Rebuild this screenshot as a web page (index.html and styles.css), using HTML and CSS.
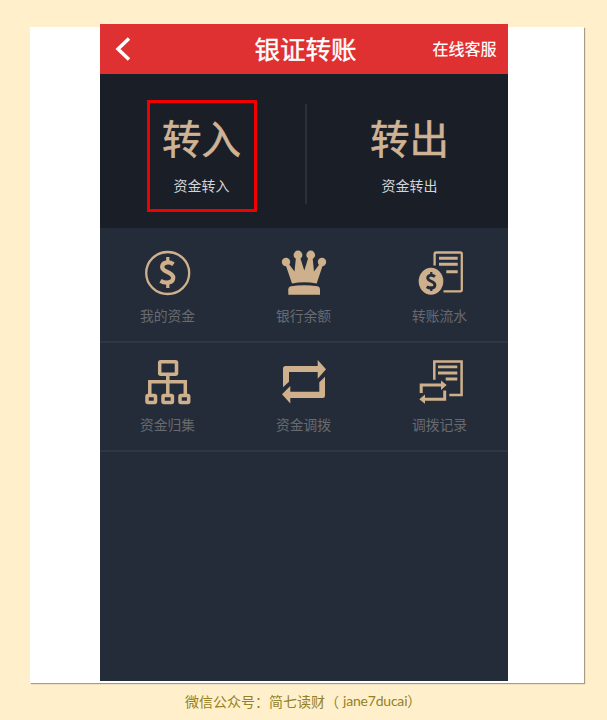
FILE: index.html
```html
<!DOCTYPE html>
<html lang="zh-CN">
<head>
<meta charset="utf-8">
<title>银证转账</title>
<link rel="stylesheet" href="styles.css">
</head>
<body>
<div class="card">
  <main class="phone">
    <header class="bar">
      <svg class="back" viewBox="0 0 16 24"><path d="M14 1.500 3 12l11 10.500"/></svg>
      <h1 class="title">银证转账</h1>
      <span class="service">在线客服</span>
    </header>
    <section class="hero">
      <div class="transfer in"><b class="big">转入</b><span class="small">资金转入</span></div>
      <div class="divider"></div>
      <div class="transfer out"><b class="big">转出</b><span class="small">资金转出</span></div>
    </section>
    <section class="row">
      <div class="item">
        <svg class="icon" viewBox="0 0 50 50">
          <ellipse class="line" cx="24.700" cy="25" rx="21.500" ry="21" stroke-width="2.300"/>
          <path class="line" stroke-width="4.300" d="M30.500 16.200C26 13 19.200 14 19.200 19c0 5.500 11 4.500 11 10.800 0 5.500-7.500 6-12.700 3"/>
          <path class="line" stroke-width="3.200" d="M24.800 9v6M24.800 34v6"/>
        </svg>
        <span class="label">我的资金</span>
      </div>
      <div class="item">
        <svg class="icon" viewBox="0 0 50 50">
          <circle class="fill" cx="7" cy="14" r="4.200"/><circle class="fill" cx="19" cy="7" r="4.400"/><circle class="fill" cx="31.700" cy="7" r="4.400"/><circle class="fill" cx="43" cy="14" r="4.200"/>
          <path class="fill" d="M6 15l7 20.500Q25 33 37.700 35.500L44.500 15 41 15.500l-6 8L33.500 9h-4l-4.200 13.500L21 9h-4l-1.500 14.500L9.500 15.500z"/>
          <path class="fill" d="M9.300 46.700v-5.500q0-2.500 2.500-3 13.500-1.800 26.700 0 2.500.5 2.500 3v5.500z"/>
        </svg>
        <span class="label">银行余额</span>
      </div>
      <div class="item">
        <svg class="icon" viewBox="0 0 50 50">
          <path class="line" stroke-width="2.300" d="M19.600 17.500V6q0-1.500 1.500-1.500h24.200q1.500 0 1.500 1.500v35.800q0 1.500-1.500 1.500H28.500"/>
          <path class="line" stroke-width="3" d="M24 10.200h18.700M24 16.300h18.700M31.300 23.700h11.400"/>
          <ellipse class="fill" cx="16" cy="33.200" rx="12.300" ry="13.500"/>
          <path class="cut" stroke-width="2.900" d="M20 28.700c-3-2.500-7.300-1.600-7.300 1.300 0 3.600 7.200 3 7.200 7 0 3.600-5 3.800-8.200 1.700"/>
          <path class="cut" stroke-width="2.200" d="M16.300 24v4M16.300 38.500v4.500"/>
        </svg>
        <span class="label">转账流水</span>
      </div>
    </section>
    <section class="row second">
      <div class="item">
        <svg class="icon" viewBox="0 0 50 50">
          <g class="line" stroke-width="3.500"><rect x="16.700" y="4.700" width="16.800" height="12.500" rx="1"/>
          <path d="M24.800 17.500v20M6.800 38V24.800h35.500V38"/></g>
          <g class="line" stroke-width="3.500"><rect x="4" y="38.500" width="8.500" height="7" rx="1"/><rect x="20" y="38.500" width="9.400" height="7" rx="1"/><rect x="37" y="38.500" width="8.700" height="7" rx="1"/></g>
        </svg>
        <span class="label">资金归集</span>
      </div>
      <div class="item">
        <svg class="icon" viewBox="0 0 50 50">
          <path class="fill" d="M4 30.300V11.500Q4 9 6.500 9h32.200V3L47 12.300l-8.300 9.400V15H10v9.700zM46 19.700v18.800q0 2.500-2.500 2.500H11.300v5.500L3 37.300 11.300 29v5.700h29v-9.400z"/>
        </svg>
        <span class="label">资金调拨</span>
      </div>
      <div class="item">
        <svg class="icon" viewBox="0 0 50 50">
          <path class="line" stroke-width="2.500" d="M19.300 22.800V4.400h27.300v33.500H34.300"/>
          <path class="line" stroke-width="2.800" d="M23 9.900h19.300M23 16h19.300M30.700 22h11.600"/>
          <path class="line" stroke-width="3" d="M6.200 36v-8H27M29.700 33.500v8.800H9"/>
          <path class="fill" d="M26 23.500l5.700 4.600L26 33zM10 37.500l-5.700 4.700L10 46.800z"/>
        </svg>
        <span class="label">调拨记录</span>
      </div>
    </section>
  </main>
</div>
<footer class="credit"><span>微信公众号：简七读财（</span><span class="latin">jane7ducai）</span></footer>
</body>
</html>
```
FILE: styles.css
```css
* { box-sizing: border-box; }
body {
  margin: 0;
  height: 720px;
  padding-top: 27px;
  overflow: hidden;
  background: #fff0cb;
  font-family: "Noto Sans CJK SC", sans-serif;
}
.card {
  width: 554px;
  height: 656px;
  margin-left: 30px;
  background: #fff;
  box-shadow: 1px 1px 1px #a69d82;
}
.phone {
  width: 408px;
  height: 657px;
  margin-left: 69.500px;
  background: #252c39;
  transform: translateY(-3px);
}
.bar {
  height: 50px;
  display: grid;
  grid-template-columns: 100px 1fr 100px;
  align-items: center;
  padding: 0 11px 0 15px;
  background: #df3032;
  color: #fff;
}
.back { width: 16px; height: 24px; fill: none; stroke: #fff; stroke-width: 3.500; }
.title { margin: 0; padding-bottom: 2px; font-size: 25.500px; line-height: 48px; font-weight: 400; text-align: center; white-space: nowrap; -webkit-text-stroke: 0.4px; }
.service { padding-bottom: 2px; font-size: 16px; line-height: 48px; text-align: right; -webkit-text-stroke: 0.2px; }
.hero {
  display: flex;
  height: 154px;
  background: #1a1e27;
  padding-top: 26px;
}
.transfer {
  display: flex;
  flex-direction: column;
  align-items: center;
  width: 110px;
  height: 112px;
  border: 3px solid transparent;
}
.in { margin-left: 47px; border-color: #f00000; }
.out { margin-left: 48px; }
.big { margin-top: 4px; font-size: 39.500px; line-height: 60px; font-weight: 400; color: #cfb394; white-space: nowrap; -webkit-text-stroke: 0.6px; }
.small { margin-top: 8px; font-size: 14px; line-height: 20px; color: #d3d5d7; }
.divider { width: 2px; height: 100px; margin: 4px 0 0 48px; background: #2b303a; }
.row {
  display: grid;
  grid-template-columns: repeat(3, 1fr);
  height: 115px;
  padding-top: 20px;
  border-bottom: 2px solid #303743;
}
.second { height: 109px; padding-top: 14px; }
.item { display: flex; flex-direction: column; align-items: center; }
.icon { width: 50px; height: 50px; }
.fill { fill: #cfb08c; }
.line { fill: none; stroke: #cfb08c; }
.cut { fill: none; stroke: #252c39; }
.label { margin-top: 7px; font-size: 13.800px; line-height: 20px; color: #676a70; }
.credit {
  display: flex;
  gap: 4px;
  padding: 8px 0 0 185px;
  font-size: 14px;
  line-height: 20px;
  color: #928127;
  white-space: nowrap;
}
.latin { font-family: Lato, "Noto Sans CJK SC", sans-serif; letter-spacing: -0.2px; }
```
